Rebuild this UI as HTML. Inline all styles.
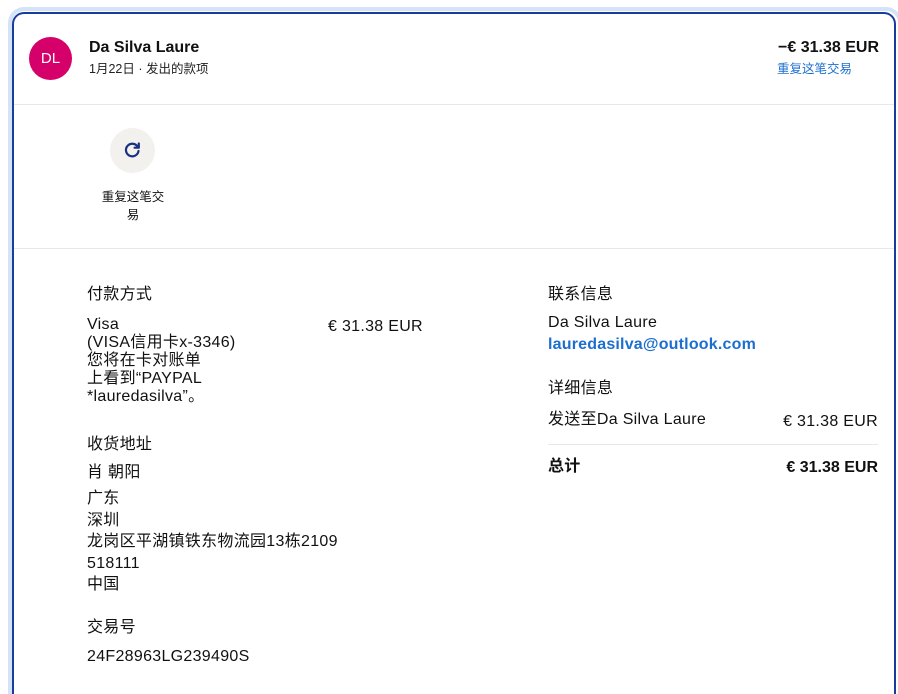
<!DOCTYPE html>
<html><head><meta charset="utf-8"><style>
*{margin:0;padding:0;box-sizing:border-box}
html,body{width:898px;height:694px;overflow:hidden}
body{background:#fff;font-family:"Liberation Sans","Noto Sans CJK SC",sans-serif;color:#111;position:relative}
.outer{position:absolute;left:8px;top:7px;width:894px;height:687px;border:4px solid #d5e3f8;border-bottom:none;border-radius:16px 16px 0 0}
.card{position:absolute;left:12px;top:12px;width:884px;height:682px;border:2px solid #1a3c9c;border-bottom:none;border-radius:12px 12px 0 0;background:#fff}
.t{position:absolute;line-height:20px;font-size:16px;letter-spacing:0.3px;white-space:nowrap}
.hr{position:absolute;height:1px;background:#e8e8e8}
</style></head><body>
<div class="outer"></div>
<div class="card"></div>
<div style="position:absolute;left:29px;top:37px;width:43px;height:43px;border-radius:50%;background:#d6006b;color:#fff;font-size:15px;line-height:43px;text-align:center">DL</div>
<div class="t" style="left:89px;top:38px;font-weight:bold;font-size:16px;letter-spacing:0">Da Silva Laure</div>
<div class="t" style="left:89px;top:59px;font-size:12.5px;color:#222;letter-spacing:0">1月22日 · 发出的款项</div>
<div class="t" style="right:19px;top:38px;font-weight:bold;font-size:16px;letter-spacing:0">−€ 31.38 EUR</div>
<div class="t" style="left:777px;top:59px;font-size:12.5px;color:#1d6fcf;letter-spacing:0">重复这笔交易</div>
<div class="hr" style="left:14px;top:104px;width:880px"></div>
<div style="position:absolute;left:110px;top:128px;width:45px;height:45px;border-radius:50%;background:#f3f1ee"></div>
<svg style="position:absolute;left:122px;top:140px" width="21" height="21" viewBox="0 0 21 21"><path d="M15.5 6.5A6.3 6.3 0 1 0 16.5 11" fill="none" stroke="#1a3082" stroke-width="2.2" stroke-linecap="round"/><path d="M16.8 3.5v4.2h-4.2" fill="none" stroke="#1a3082" stroke-width="2.2" stroke-linecap="round" stroke-linejoin="round"/></svg>
<div class="t" style="left:96px;top:188px;width:74px;text-align:center;font-size:12.5px;letter-spacing:0;white-space:normal;line-height:18px">重复这笔交易</div>
<div class="hr" style="left:14px;top:248px;width:880px"></div>
<div class="t" style="left:87px;top:285px">付款方式</div>
<div class="t" style="left:87px;top:316px;line-height:18px">Visa<br>(VISA信用卡x-3346)<br>您将在卡对账单<br>上看到“PAYPAL<br>*lauredasilva”。</div>
<div class="t" style="left:328px;top:317px">€ 31.38 EUR</div>
<div class="t" style="left:87px;top:435px">收货地址</div>
<div class="t" style="left:87px;top:463px">肖 朝阳</div>
<div class="t" style="left:87px;top:488px;line-height:21.5px">广东<br>深圳<br>龙岗区平湖镇铁东物流园13栋2109<br>518111<br>中国</div>
<div class="t" style="left:87px;top:618px">交易号</div>
<div class="t" style="left:87px;top:647px">24F28963LG239490S</div>
<div class="t" style="left:548px;top:285px">联系信息</div>
<div class="t" style="left:548px;top:313px">Da Silva Laure</div>
<div class="t" style="left:548px;top:335px;color:#1d6fcf;font-weight:bold;letter-spacing:0.2px">lauredasilva@outlook.com</div>
<div class="t" style="left:548px;top:379px">详细信息</div>
<div class="t" style="left:548px;top:410px">发送至Da Silva Laure</div>
<div class="t" style="right:20px;top:412px">€ 31.38 EUR</div>
<div class="hr" style="left:548px;top:444px;width:330px"></div>
<div class="t" style="left:548px;top:457px;font-weight:bold">总计</div>
<div class="t" style="right:20px;top:458px;font-weight:bold;letter-spacing:0">€ 31.38 EUR</div>
</body></html>
